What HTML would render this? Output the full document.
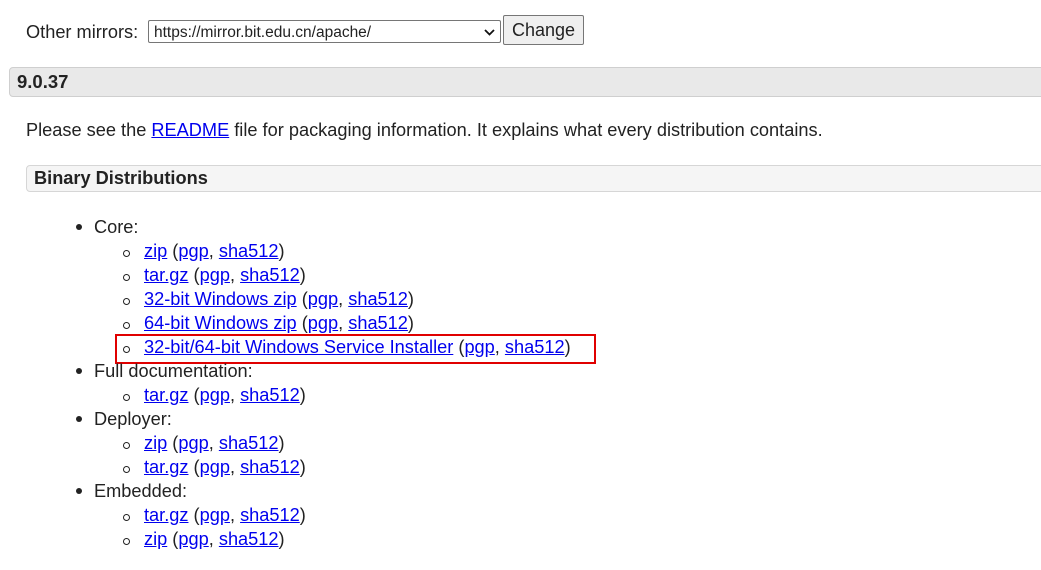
<!DOCTYPE html>
<html><head><meta charset="utf-8"><style>
body{margin:0;width:1041px;height:570px;background:#fff;font-family:"Liberation Sans",sans-serif;font-size:18.2px;color:#222;position:relative;overflow:hidden}
.a{position:absolute;white-space:nowrap}
a{color:#0000ee;text-decoration:underline}
.row{position:absolute;height:24px;line-height:24px;white-space:nowrap}
.dot{position:absolute;width:6px;height:6px;border-radius:50%;background:#222}
.circ{position:absolute;width:5px;height:5px;border-radius:50%;border:1px solid #222;margin-top:2px}
</style></head><body>
<div class="a" style="left:26px;top:20px;line-height:24px">Other mirrors:</div>
<div class="a" style="left:148px;top:20px;width:353px;height:23px;border:1px solid #767676;border-radius:2px;font-size:15.5px;line-height:23px;box-sizing:border-box;padding-left:5px">https://mirror.bit.edu.cn/apache/
<svg style="position:absolute;right:5px;top:8px" width="11" height="7" viewBox="0 0 11 7"><path d="M1 1l4.5 4.5L10 1" stroke="#111" stroke-width="1.8" fill="none"/></svg></div>
<div class="a" style="left:503px;top:15px;width:81px;height:30px;border:1px solid #767676;border-radius:2px;background:#efefef;box-sizing:border-box;text-align:center;line-height:28px;font-size:18px">Change</div>
<div class="a" style="left:9px;top:67px;width:1040px;height:30px;background:#e9e9e9;border:1px solid #cfcfcf;border-radius:4px;box-sizing:border-box;font-weight:bold;font-size:18.5px;line-height:28px;padding-left:7px">9.0.37</div>
<div class="a" style="left:26px;top:118px;line-height:24px">Please see the <a>README</a> file for packaging information. It explains what every distribution contains.</div>
<div class="a" style="left:26px;top:165px;width:1030px;height:27px;background:#f5f5f5;border:1px solid #d6d6d6;border-radius:4px;box-sizing:border-box;font-weight:bold;line-height:25px;padding-left:7px">Binary Distributions</div>

<div class="dot" style="left:76px;top:224px"></div><div class="row" style="left:94px;top:215px">Core:</div>
<div class="circ" style="left:123px;top:248px"></div><div class="row" style="left:144px;top:239px"><a>zip</a> (<a>pgp</a>, <a>sha512</a>)</div>
<div class="circ" style="left:123px;top:272px"></div><div class="row" style="left:144px;top:263px"><a>tar.gz</a> (<a>pgp</a>, <a>sha512</a>)</div>
<div class="circ" style="left:123px;top:296px"></div><div class="row" style="left:144px;top:287px"><a>32-bit Windows zip</a> (<a>pgp</a>, <a>sha512</a>)</div>
<div class="circ" style="left:123px;top:320px"></div><div class="row" style="left:144px;top:311px"><a>64-bit Windows zip</a> (<a>pgp</a>, <a>sha512</a>)</div>
<div class="circ" style="left:123px;top:344px"></div><div class="row" style="left:144px;top:335px"><a>32-bit/64-bit Windows Service Installer</a> (<a>pgp</a>, <a>sha512</a>)</div>
<div class="a" style="left:115px;top:334px;width:481px;height:30px;border:2px solid #e00000;box-sizing:border-box"></div>
<div class="dot" style="left:76px;top:368px"></div><div class="row" style="left:94px;top:359px">Full documentation:</div>
<div class="circ" style="left:123px;top:392px"></div><div class="row" style="left:144px;top:383px"><a>tar.gz</a> (<a>pgp</a>, <a>sha512</a>)</div>
<div class="dot" style="left:76px;top:416px"></div><div class="row" style="left:94px;top:407px">Deployer:</div>
<div class="circ" style="left:123px;top:440px"></div><div class="row" style="left:144px;top:431px"><a>zip</a> (<a>pgp</a>, <a>sha512</a>)</div>
<div class="circ" style="left:123px;top:464px"></div><div class="row" style="left:144px;top:455px"><a>tar.gz</a> (<a>pgp</a>, <a>sha512</a>)</div>
<div class="dot" style="left:76px;top:488px"></div><div class="row" style="left:94px;top:479px">Embedded:</div>
<div class="circ" style="left:123px;top:512px"></div><div class="row" style="left:144px;top:503px"><a>tar.gz</a> (<a>pgp</a>, <a>sha512</a>)</div>
<div class="circ" style="left:123px;top:536px"></div><div class="row" style="left:144px;top:527px"><a>zip</a> (<a>pgp</a>, <a>sha512</a>)</div>
</body></html>
